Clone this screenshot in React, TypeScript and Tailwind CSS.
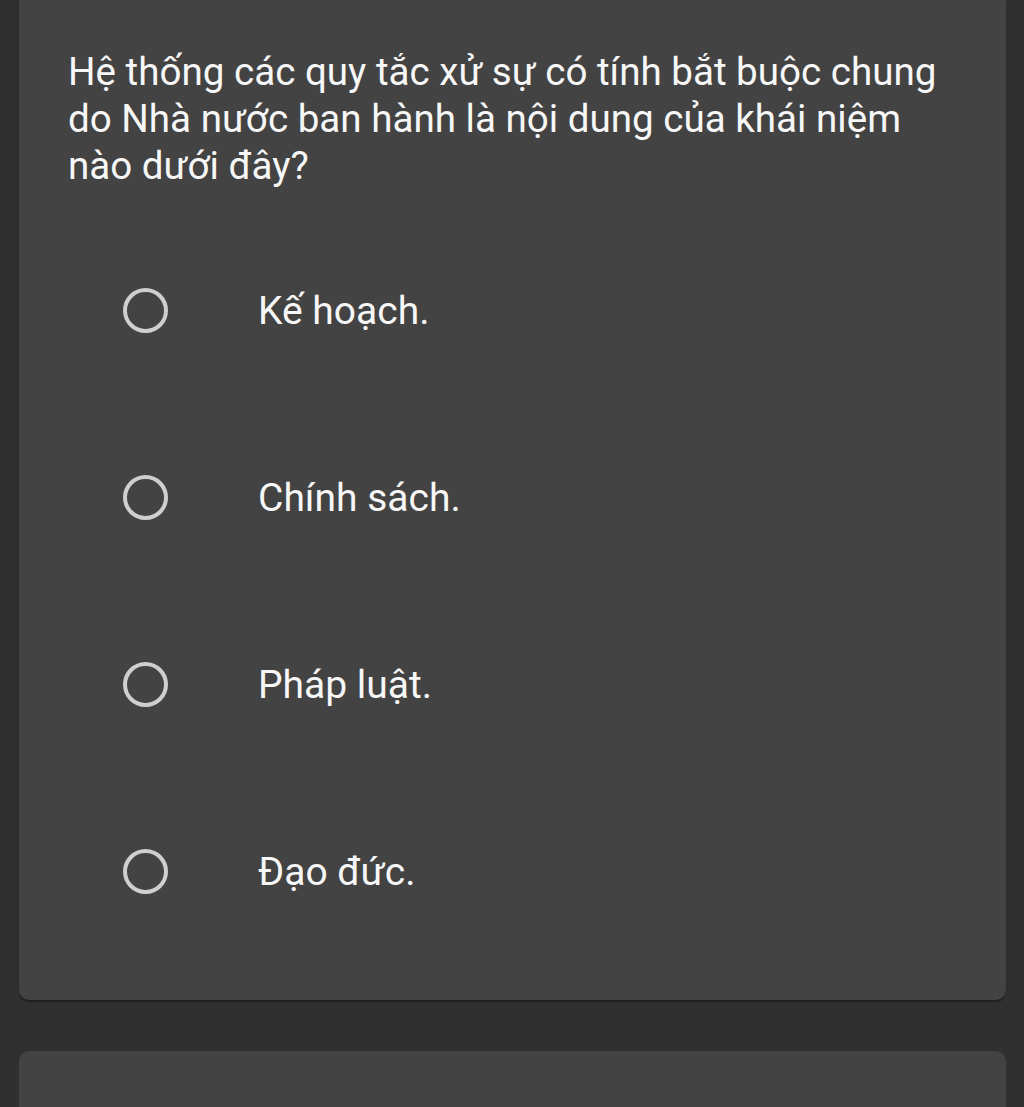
const options = ["Kế hoạch.", "Chính sách.", "Pháp luật.", "Đạo đức."];

export default function App() {
  return (
    <div
      className="h-[1107px] w-full overflow-hidden bg-[#303030]"
      style={{ fontFamily: "Roboto, 'Noto Sans', sans-serif" }}
    >
      {/* Question card */}
      <div className="ml-[19px] w-[987px] rounded-b-[10px] bg-[#434343] pb-[35px] pl-[49px] pt-[48px] shadow-[0_2px_2px_rgba(0,0,0,0.35)]">
        <p className="pr-[45px] text-[38.6px] leading-[47px] text-[#f7f7f7]">
          Hệ thống các quy tắc xử sự có tính bắt buộc chung do Nhà nước ban hành là nội dung của khái niệm nào dưới đây?
        </p>

        <div className="mt-[28px]">
          {options.map((opt) => (
            <div key={opt} className="flex h-[187px] items-center">
              <span className="ml-[55px] h-[45px] w-[45px] rounded-full border-[4px] border-[#cfcfcf]" />
              <span className="ml-[90px] pt-[2px] text-[39px] leading-[47px] text-[#f7f7f7]">{opt}</span>
            </div>
          ))}
        </div>
      </div>

      {/* Next card (cut off) */}
      <div className="ml-[19px] mt-[51px] h-[200px] w-[987px] rounded-t-[10px] bg-[#434343]" />
    </div>
  );
}
